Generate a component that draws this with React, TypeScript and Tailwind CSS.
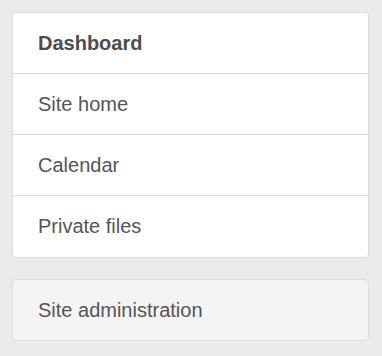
export default function App() {
  const items = ['Site home', 'Calendar', 'Private files'];

  return (
    <div className="min-h-[356px] w-[382px] bg-[#eaebed] p-3 font-['Liberation_Sans',Arial,sans-serif] text-[20px] text-[#555]">
      {/* Navigation block */}
      <div className="w-[357px] overflow-hidden rounded-[4px] border border-[#dcdcdc] bg-white">
        <div className="border-b border-[#dcdcdc] px-[25px] py-[18px] leading-[24px] font-bold text-[#4d4d4d]">
          Dashboard
        </div>
        {items.map((item, i) => (
          <div
            key={item}
            className={
              i < items.length - 1
                ? 'border-b border-[#dcdcdc] px-[25px] py-[18px] leading-[24px]'
                : 'px-[25px] pt-[18px] pb-[19px] leading-[24px]'
            }
          >
            {item}
          </div>
        ))}
      </div>

      {/* Settings block */}
      <div className="mt-[21px] w-[357px] rounded-[4px] border border-[#dcdcdc] bg-[#f4f4f4] px-[25px] py-[18px] leading-[24px]">
        Site administration
      </div>
    </div>
  );
}
